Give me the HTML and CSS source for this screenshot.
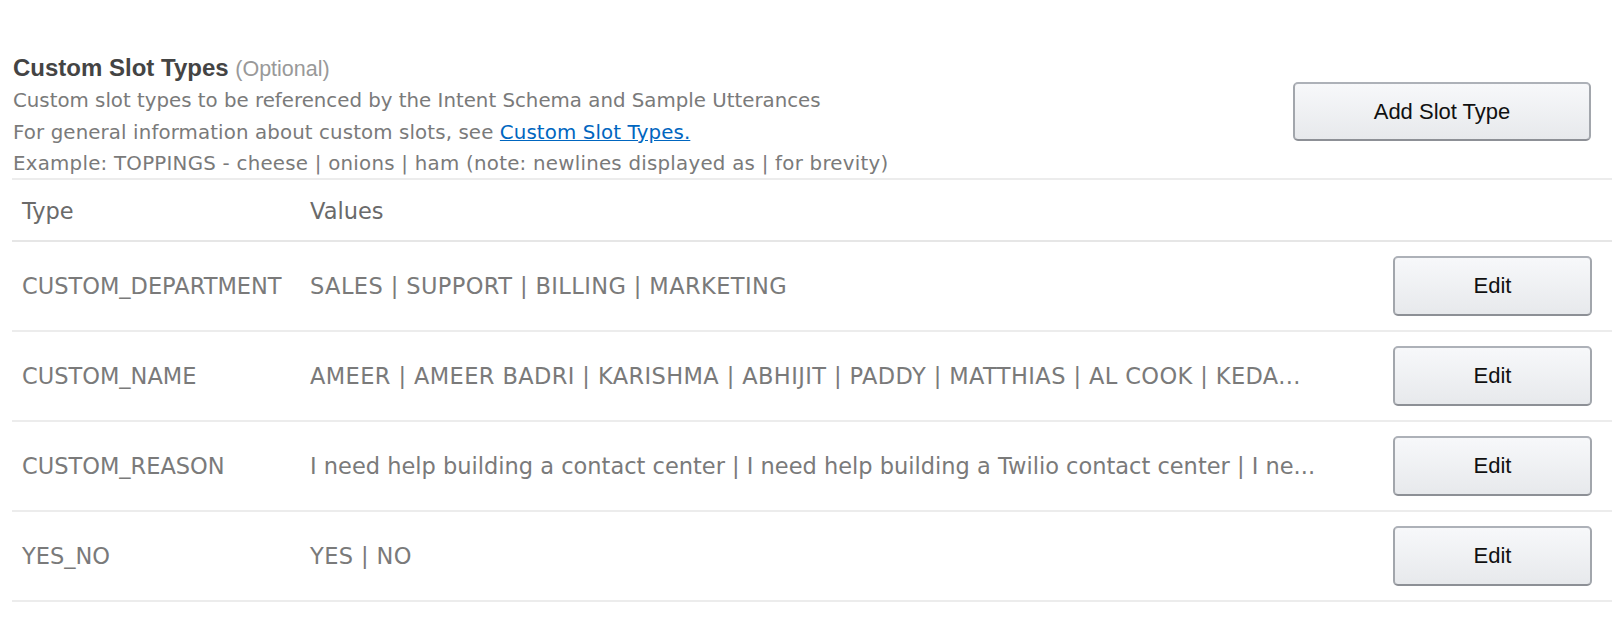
FILE: index.html
```html
<!DOCTYPE html>
<html>
<head>
<meta charset="utf-8">
<link rel="stylesheet" href="styles.css">
</head>
<body>
<div class="page">
  <div class="intro">
    <div class="intro-text">
      <h2 class="title">Custom Slot Types <span class="optional">(Optional)</span></h2>
      <p class="desc">Custom slot types to be referenced by the Intent Schema and Sample Utterances</p>
      <p class="desc desc-link">For general information about custom slots, see <a href="#" class="link">Custom Slot Types.</a></p>
      <p class="desc desc-example">Example: TOPPINGS - cheese | onions | ham (note: newlines displayed as | for brevity)</p>
    </div>
    <button class="btn btn-add">Add Slot Type</button>
  </div>
  <table class="slots">
    <colgroup>
      <col class="c-type">
      <col class="c-values">
      <col class="c-action">
    </colgroup>
    <thead>
      <tr><th>Type</th><th>Values</th><th></th></tr>
    </thead>
    <tbody>
      <tr>
        <td>CUSTOM_DEPARTMENT</td>
        <td class="values caps">SALES | SUPPORT | BILLING | MARKETING</td>
        <td class="action"><button class="btn btn-edit">Edit</button></td>
      </tr>
      <tr>
        <td>CUSTOM_NAME</td>
        <td class="values caps">AMEER | AMEER BADRI | KARISHMA | ABHIJIT | PADDY | MATTHIAS | AL COOK | KEDA...</td>
        <td class="action"><button class="btn btn-edit">Edit</button></td>
      </tr>
      <tr>
        <td>CUSTOM_REASON</td>
        <td class="values">I need help building a contact center | I need help building a Twilio contact center | I ne...</td>
        <td class="action"><button class="btn btn-edit">Edit</button></td>
      </tr>
      <tr>
        <td>YES_NO</td>
        <td class="values caps">YES | NO</td>
        <td class="action"><button class="btn btn-edit">Edit</button></td>
      </tr>
    </tbody>
  </table>
</div>
</body>
</html>
```
FILE: styles.css
```css
html, body {
  margin: 0;
  padding: 0;
  background: #ffffff;
}
.page {
  width: 1600px;
  margin-left: 12px;
  padding-top: 50px;
  font-family: "DejaVu Sans", "Bitstream Vera Sans", Verdana, sans-serif;
  color: #7a7a7a;
}
.intro {
  display: flex;
  justify-content: space-between;
  align-items: flex-start;
  padding-right: 21px;
}
.intro-text {
  padding-left: 1px;
}
.title {
  margin: 0;
  font-family: "Liberation Sans", Arial, sans-serif;
  font-size: 24px;
  font-weight: bold;
  color: #444444;
  line-height: 31px;
  padding-top: 2px;
}
.optional {
  font-weight: normal;
  font-size: 21.5px;
  color: #999999;
}
.desc {
  margin: 0;
  font-size: 19.8px;
  line-height: 32px;
}
.desc-link {
  letter-spacing: 0.12px;
}
.desc-example {
  letter-spacing: 0.25px;
  line-height: 29px;
}
.link {
  color: #0066c0;
  text-decoration: underline;
}
.btn {
  font-family: "Liberation Sans", Arial, sans-serif;
  font-size: 22px;
  color: #111111;
  background: linear-gradient(to bottom, #f7f8fa, #e7e9ec);
  border: 2px solid;
  border-color: #adb1b8 #a2a6ac #8d9096;
  border-radius: 5px;
  cursor: pointer;
  padding: 0;
}
.btn-add {
  width: 298px;
  height: 59px;
  margin-top: 32px;
}
.btn-edit {
  width: 199px;
  height: 60px;
}
.slots {
  width: 1600px;
  border-collapse: collapse;
  table-layout: fixed;
  border-top: 2px solid #ececec;
}
.c-type { width: 288px; }
.c-values { width: 1010px; }
.c-action { width: 302px; }
.slots th {
  text-align: left;
  font-weight: normal;
  font-size: 22.5px;
  color: #6a6a6a;
  height: 58px;
  padding: 2px 10px 0;
  border-bottom: 2px solid #e6e6e6;
}
.slots td {
  font-size: 22.5px;
  height: 88px;
  padding: 0 10px;
  border-bottom: 2px solid #ececec;
  white-space: nowrap;
  color: #7a7a7a;
}
.slots td.caps {
  letter-spacing: 0.4px;
}
.slots td.action {
  text-align: right;
  padding-right: 20px;
}
```
